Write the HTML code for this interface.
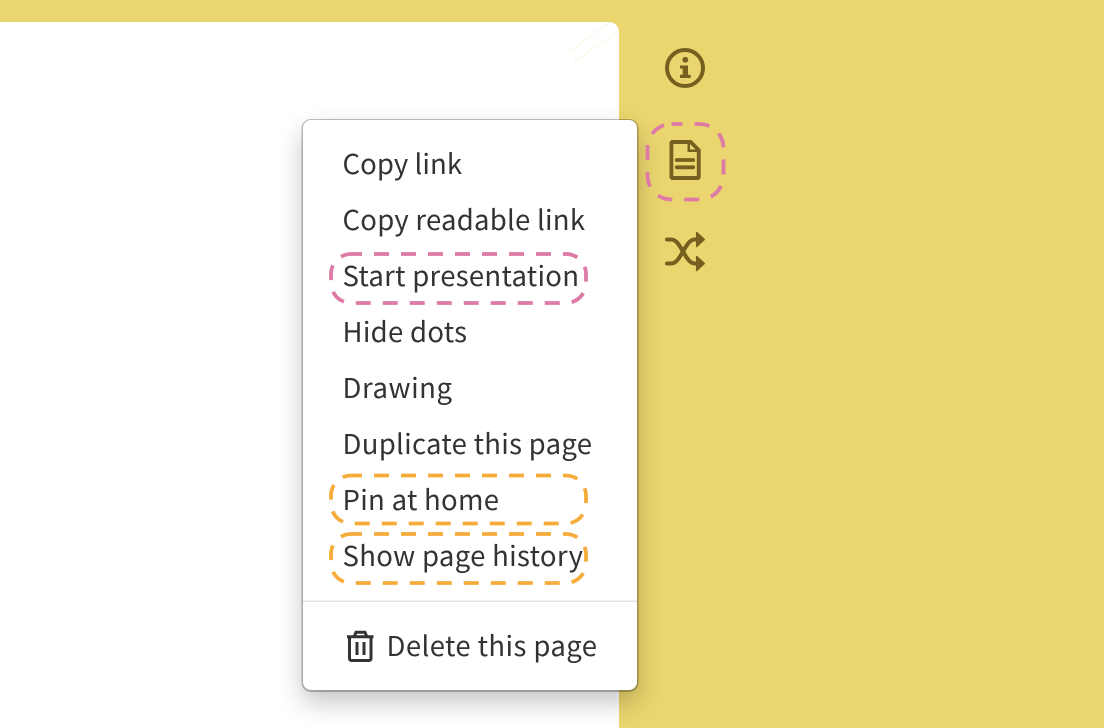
<!DOCTYPE html>
<html>
<head>
<meta charset="utf-8">
<style>
html,body{margin:0;padding:0;width:1104px;height:728px;overflow:hidden;background:#ebd56e;}
#wrap{position:absolute;left:0;top:0;width:1104px;height:728px;overflow:hidden;background:#ebd56e;}
svg{position:absolute;left:0;top:0;display:block;}
#panel{position:absolute;left:0;top:22px;width:619px;height:706px;background:#fff;border-radius:0 10px 0 0;}
#menu{position:absolute;left:303px;top:120px;width:334px;height:570px;box-sizing:border-box;background:#fff;border-radius:8px;box-shadow:0 0.5px 0 1.5px rgba(0,0,0,.25),0 12px 26px rgba(0,0,0,.24);}
text{font-family:"Noto Sans CJK JP","Liberation Sans",sans-serif;font-size:27.5px;fill:#333;}
</style>
</head>
<body>
<div id="wrap">
<div id="panel"></div>
<svg width="1104" height="728" viewBox="0 0 1104 728" style="z-index:1">
  <g stroke="#ebd56e" stroke-width="1" stroke-dasharray="1 3" fill="none" opacity=".7">
    <path d="M610 22L565 55"/>
    <path d="M618 31L575 62"/>
  </g>
</svg>
<div id="menu" style="z-index:2"></div>
<svg width="1104" height="728" viewBox="0 0 1104 728" style="z-index:3">
  <text x="342.500" y="174" textLength="119.500">Copy link</text>
  <text x="342.500" y="230" textLength="242.500">Copy readable link</text>
  <text x="342.500" y="286" textLength="236.500">Start presentation</text>
  <text x="342.500" y="342" textLength="124.500">Hide dots</text>
  <text x="342.500" y="398" textLength="109.500">Drawing</text>
  <text x="342.500" y="454" textLength="249.500">Duplicate this page</text>
  <text x="342.500" y="510" textLength="156.500">Pin at home</text>
  <text x="342.500" y="566" textLength="240.500">Show page history</text>
  <text x="386.500" y="656" textLength="210.500">Delete this page</text>

  <rect x="303" y="600.500" width="334" height="1.500" fill="#e4e4e4"/>

  <g fill="none" stroke-width="3.800" stroke-dasharray="15 12" stroke-dashoffset="4">
    <rect x="331" y="254" width="255" height="49" rx="20" stroke="#dd7aa6"/>
    <rect x="331" y="475.500" width="255" height="48" rx="20" stroke="#f5ac3a"/>
    <rect x="331" y="534" width="255" height="49" rx="20" stroke="#f5ac3a"/>
    <rect x="647.500" y="124" width="76" height="75.500" rx="24" stroke="#dd7aa6"/>
  </g>

  <!-- trash -->
  <g fill="none" stroke="#333" stroke-width="3">
    <path d="M349.500 637V658.500a2 2 0 0 0 2 2H369a2 2 0 0 0 2-2V637"/>
    <path d="M347 636.700H373.500"/>
    <path d="M354.500 636L356 632.300H365l1.500 3.700"/>
    <path d="M357 642V655M364 642V655"/>
  </g>

  <!-- info -->
  <circle cx="685" cy="68" r="18" fill="none" stroke="#75601f" stroke-width="4"/>
  <g fill="#75601f">
    <circle cx="685.300" cy="59.800" r="2.900"/>
    <path d="M680 65.500H688V74.700H690.700V78H680V74.700H682.700V68.500H680Z"/>
  </g>

  <!-- doc -->
  <path fill="#75601f" fill-rule="evenodd" d="M672.500 140H691.500L700.700 149.500V177a3 3 0 0 1-3 3H672.500a3 3 0 0 1-3-3V143a3 3 0 0 1 3-3ZM673.300 144V176H696.800V152H687.500V144ZM690 144V149.500H695.500Z"/>
  <path d="M676.800 160H693.200M676.800 167.300H693.200" fill="none" stroke="#75601f" stroke-width="3.800" stroke-linecap="round"/>

  <!-- shuffle -->
  <g fill="none" stroke="#75601f" stroke-width="4" stroke-linecap="round">
    <path d="M667 239.500H671C676 239.500 679 244.500 683 251.500C687 258.500 690 263.500 695 263.500H698"/>
    <path d="M667 263.500H671C676 263.500 679 258.500 683 251.500C687 244.500 690 239.500 695 239.500H698"/>
  </g>
  <g fill="#75601f" stroke="#75601f" stroke-width="1.500" stroke-linejoin="round">
    <path d="M696.700 232.500L704.300 239.500L696.700 246.500Z"/>
    <path d="M696.700 256.500L704.300 263.500L696.700 270.500Z"/>
  </g>
</svg>
</div>
</body>
</html>
